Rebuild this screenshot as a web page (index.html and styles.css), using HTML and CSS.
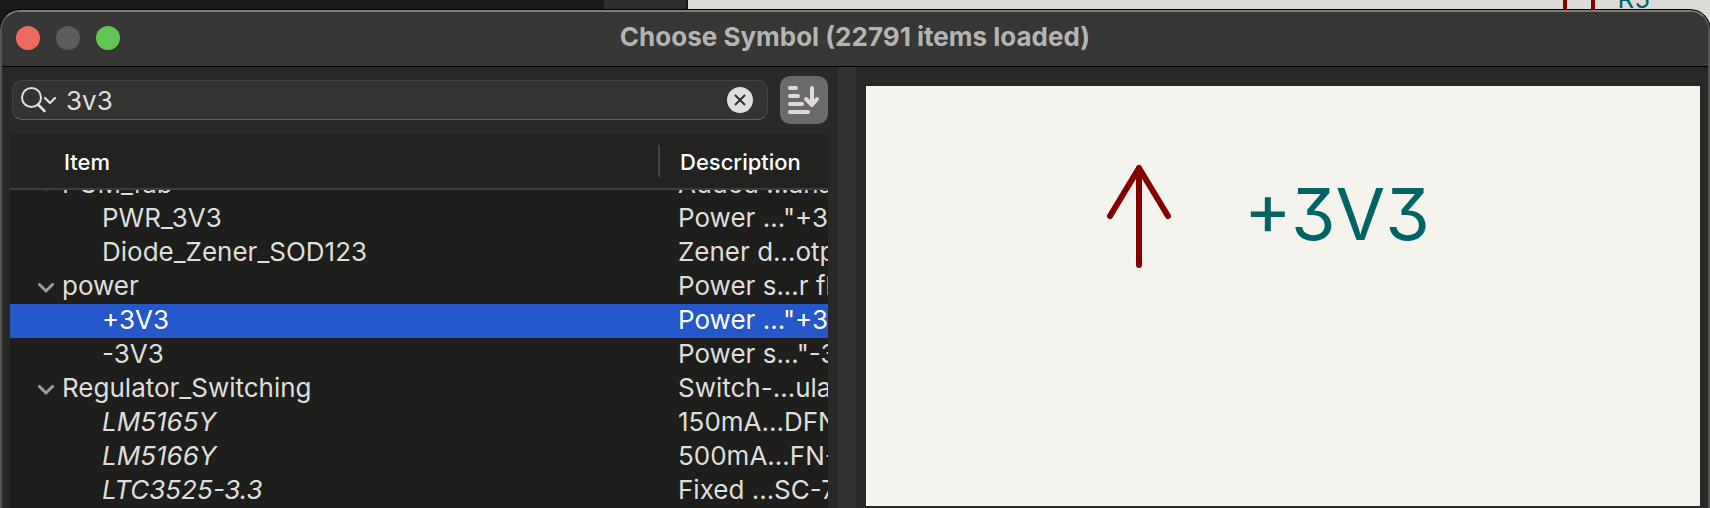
FILE: index.html
```html
<!DOCTYPE html>
<html lang="en">
<head>
    <meta charset="UTF-8">
    <title>Choose Symbol</title>
    <link rel="stylesheet" href="styles.css">
</head>
<body>
    <!-- schematic editor behind the dialog -->
    <div class="editor">
        <div class="editor-panel"></div>
        <div class="editor-toolbar"></div>
        <div class="editor-canvas">
            <span class="resistor"></span>
            <span class="ref">R5</span>
        </div>
    </div>

    <div class="dialog">
        <header class="titlebar">
            <div class="lights">
                <button class="light close" aria-label="Close"></button>
                <button class="light minimize" aria-label="Minimize" disabled></button>
                <button class="light zoom" aria-label="Zoom"></button>
            </div>
            <h1>Choose Symbol (22791 items loaded)</h1>
        </header>

        <main class="content">
            <section class="left">
                <div class="toolbar">
                    <div class="search">
                        <label for="filter" aria-label="Filter">
                            <svg width="36" height="26" viewBox="0 0 36 26" fill="none" stroke="#dededc" stroke-width="2" stroke-linecap="round" stroke-linejoin="round">
                                <circle cx="10.5" cy="10.5" r="9.5"/>
                                <path d="M17 17.5l6.5 6.5" stroke-width="2.6"/>
                                <path d="M24 11l5 5 5-5" stroke-width="2.2"/>
                            </svg>
                        </label>
                        <input type="text" id="filter" value="3v3">
                        <button class="clear" aria-label="Clear">
                            <svg width="26" height="26" viewBox="0 0 26 26">
                                <circle cx="13" cy="13" r="13" fill="#dfdfdd"/>
                                <path d="M8.5 8.5l9 9M17.5 8.5l-9 9" stroke="#30302e" stroke-width="2" stroke-linecap="round"/>
                            </svg>
                        </button>
                    </div>
                    <button class="sort" aria-label="Sort">
                        <svg width="32" height="30" viewBox="0 0 32 30" fill="none" stroke="#dcd8dc" stroke-width="4" stroke-linecap="round" stroke-linejoin="round">
                            <path d="M2 3h6M2 11h8M2 19h12M2 27h18"/>
                            <path d="M24 3v16M18 14l6 6 5-6" stroke="#e2d6e2"/>
                        </svg>
                    </button>
                </div>

                <div class="tree" id="tree">
                    <table>
                        <thead>
                            <tr><th class="col-item">Item</th><th class="col-desc">Description</th></tr>
                        </thead>
                        <tbody>
                            <tr class="lib"><td><svg class="arrow" viewBox="0 0 16 10"><path d="M1.5 1.5l6.5 6.5 6.5-6.5"/></svg>PCM_fab</td><td>Added ...ana</td></tr>
                            <tr><td>PWR_3V3</td><td>Power ..."+3V</td></tr>
                            <tr><td>Diode_Zener_SOD123</td><td>Zener d...otp</td></tr>
                            <tr class="lib"><td><svg class="arrow" viewBox="0 0 16 10"><path d="M1.5 1.5l6.5 6.5 6.5-6.5"/></svg>power</td><td>Power s...r fl</td></tr>
                            <tr class="selected"><td>+3V3</td><td>Power ..."+3V</td></tr>
                            <tr><td>-3V3</td><td>Power s..."-3</td></tr>
                            <tr class="lib"><td><svg class="arrow" viewBox="0 0 16 10"><path d="M1.5 1.5l6.5 6.5 6.5-6.5"/></svg>Regulator_Switching</td><td>Switch-...ula</td></tr>
                            <tr class="alias"><td>LM5165Y</td><td>150mA...DFN</td></tr>
                            <tr class="alias"><td>LM5166Y</td><td>500mA...FN-</td></tr>
                            <tr class="alias"><td>LTC3525-3.3</td><td>Fixed ...SC-7</td></tr>
                        </tbody>
                    </table>
                </div>
            </section>

            <div class="splitter"></div>

            <section class="right">
                <div class="preview">
                    <svg class="power-arrow" width="66" height="104" viewBox="0 0 66 104" fill="none" stroke="#840000" stroke-width="6" stroke-linecap="round" stroke-linejoin="round">
                        <path d="M33 101V4M4 52L33 4l29 48"/>
                    </svg>
                    <span class="value">+3V3</span>
                </div>
            </section>
        </main>
    </div>
    <script>
        document.getElementById("tree").scrollTop = 22;
    </script>
</body>
</html>
```

FILE: styles.css
```css
* {
    box-sizing: border-box;
}
body {
    margin: 0;
    height: 100vh;
    display: flex;
    flex-direction: column;
    overflow: hidden;
    background-color: #1a1a1a;
    font-family: Inter, "Liberation Sans", sans-serif;
    color: #dededc;
}
button {
    padding: 0;
    border: none;
    background: none;
}
svg {
    display: block;
}

/* editor behind the dialog */
.editor {
    position: absolute;
    top: 0;
    left: 0;
    right: 0;
    height: 40px;
    display: flex;
    overflow: hidden;
}
.editor-panel {
    width: 604px;
    background-color: #1a1a1a;
}
.editor-toolbar {
    width: 84px;
    background-color: #2d2d2d;
    border-right: 2px solid #161616;
}
.editor-canvas {
    flex: 1;
    display: flex;
    justify-content: flex-end;
    padding-right: 60px;
    background-color: #dddbd7;
}
.resistor {
    width: 32px;
    margin-right: 22px;
    border-left: 4px solid #840000;
    border-right: 4px solid #840000;
}
.ref {
    margin-top: -15px;
    font-size: 26px;
    line-height: 28px;
    color: #006464;
}

/* dialog */
.dialog {
    position: relative;
    flex: 1;
    min-height: 0;
    margin-top: 10px;
    display: flex;
    flex-direction: column;
    border: 2px solid #545452;
    border-top-color: #7c7c7a;
    border-bottom: none;
    border-radius: 20px 20px 0 0;
    box-shadow: 0 0 0 1px #000000;
    background-color: #282826;
    overflow: hidden;
}
.titlebar {
    flex: none;
    height: 55px;
    display: grid;
    grid-template-columns: 1fr auto 1fr;
    align-items: center;
    padding: 0 14px 2px;
    background-color: #373735;
    border-bottom: 1px solid #000000;
}
.lights {
    display: flex;
    gap: 16px;
}
.light {
    width: 24px;
    height: 24px;
    border-radius: 50%;
}
.close {
    background-color: #ed6a5e;
}
.minimize {
    background-color: #5c5c5a;
}
.zoom {
    background-color: #61c554;
}
h1 {
    margin: 0;
    padding-bottom: 2px;
    font-size: 26px;
    line-height: 30px;
    font-weight: 700;
    color: #b4b4b2;
}
.content {
    flex: 1;
    min-height: 0;
    display: grid;
    grid-template-columns: 836fr 18px 852fr;
}
.left {
    min-width: 0;
    min-height: 0;
    display: flex;
    flex-direction: column;
    padding: 9px 10px 0 8px;
}
.toolbar {
    flex: none;
    display: flex;
    align-items: center;
    gap: 12px;
    padding-left: 2px;
    margin-bottom: 10px;
}
.search {
    flex: 1;
    height: 40px;
    display: flex;
    align-items: center;
    padding: 0 14px 0 8px;
    background-color: #333331;
    border: 1px solid #444442;
    border-bottom-color: #636361;
    border-radius: 10px;
}
.search input {
    flex: 1;
    min-width: 0;
    height: 32px;
    padding: 0 10px 0 9px;
    border: none;
    outline: none;
    background: none;
    font-family: inherit;
    font-size: 26px;
    color: #dededc;
}
.sort {
    width: 48px;
    height: 48px;
    display: flex;
    align-items: center;
    justify-content: center;
    border-radius: 10px;
    background-color: #6a6a6a;
}

/* symbol tree */
.tree {
    flex: 1;
    min-height: 0;
    overflow: hidden;
    background-color: #1e1e1d;
}
table {
    width: 100%;
    table-layout: fixed;
    border-collapse: separate;
    border-spacing: 0;
}
th {
    position: sticky;
    top: 0;
    height: 56px;
    padding: 2px 20px 0;
    border-bottom: 2px solid #3d3d3b;
    background-color: #222220;
    background-repeat: no-repeat;
    font-size: 22px;
    font-weight: 500;
    text-align: left;
    color: #ffffff;
}
.col-item {
    width: 650px;
    padding-left: 54px;
    background-image: linear-gradient(#444442, #444442);
    background-size: 2px 32px;
    background-position: right center;
}
td {
    height: 34px;
    padding: 0 0 2px 18px;
    font-size: 26px;
    line-height: 32px;
    white-space: nowrap;
    overflow: hidden;
}
td:first-child {
    padding-left: 92px;
}
.lib td:first-child {
    padding-left: 28px;
}
.arrow {
    display: inline-block;
    width: 16px;
    height: 10px;
    margin-right: 8px;
    vertical-align: middle;
    fill: none;
    stroke: #9c9c9a;
    stroke-width: 3;
    stroke-linecap: round;
    stroke-linejoin: round;
}
.alias td:first-child {
    font-style: italic;
}
.selected td {
    background-color: #2457c9;
    color: #ffffff;
}

.splitter {
    background-color: #323232;
}

/* preview */
.right {
    padding: 19px 8px 2px 10px;
}
.preview {
    height: 100%;
    display: flex;
    align-items: flex-start;
    justify-content: center;
    gap: 72px;
    padding: 78px 30px 0 0;
    background-color: #f4f3ee;
}
.value {
    padding-top: 10px;
    font-size: 72px;
    line-height: 80px;
    font-feature-settings: "cv09";
    color: #006464;
}
```
